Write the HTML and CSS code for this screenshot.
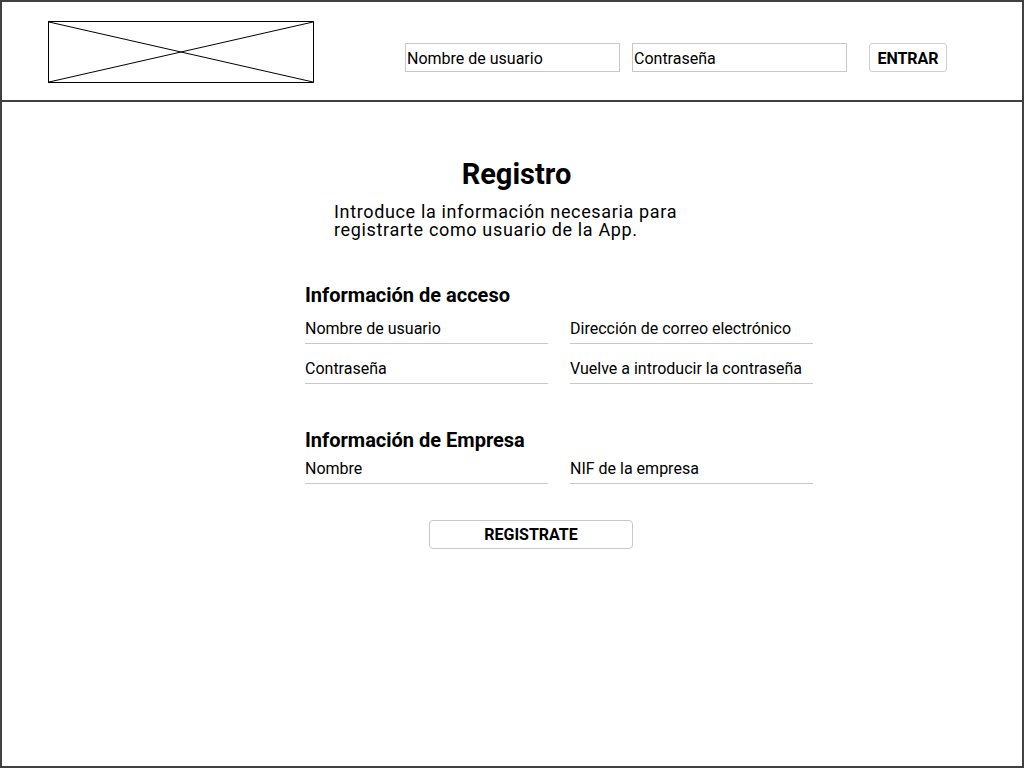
FILE: index.html
```html
<!DOCTYPE html>
<html lang="es">
<head>
<meta charset="utf-8">
<title>Registro</title>
<link rel="stylesheet" href="styles.css">
</head>
<body>
<div class="frame">
  <header class="topbar">
    <div class="logo">
      <svg class="logo-x" viewBox="0 0 100 100" preserveAspectRatio="none">
        <line x1="0" y1="0" x2="100" y2="100" vector-effect="non-scaling-stroke"/>
        <line x1="0" y1="100" x2="100" y2="0" vector-effect="non-scaling-stroke"/>
      </svg>
    </div>
    <div class="login">
      <div class="login-field">Nombre de usuario</div>
      <div class="login-field">Contraseña</div>
      <div class="btn-enter">ENTRAR</div>
    </div>
  </header>
  <main class="content">
    <div class="intro">
      <h1 class="title">Registro</h1>
      <p class="lead">Introduce la información necesaria para<br>registrarte como usuario de la App.</p>
    </div>
    <div class="form">
      <h2 class="section-title">Información de acceso</h2>
      <div class="fields">
        <div class="field">Nombre de usuario</div>
        <div class="field">Dirección de correo electrónico</div>
        <div class="field">Contraseña</div>
        <div class="field">Vuelve a introducir la contraseña</div>
      </div>
      <h2 class="section-title section-title--company">Información de Empresa</h2>
      <div class="fields">
        <div class="field">Nombre</div>
        <div class="field">NIF de la empresa</div>
      </div>
      <div class="btn-register">REGISTRATE</div>
    </div>
  </main>
</div>
</body>
</html>
```
FILE: styles.css
```css
* { box-sizing: border-box; }

body {
  margin: 0;
  background: #fff;
  color: #000;
  font-family: Roboto, "Liberation Sans", sans-serif;
}

.frame {
  width: 1024px;
  height: 768px;
  border: 2px solid #404040;
  display: flex;
  flex-direction: column;
}

.topbar {
  height: 100px;
  flex: none;
  border-bottom: 2px solid #404040;
  display: flex;
  align-items: flex-start;
  padding: 19px 0 0 46px;
}

.logo {
  width: 266px;
  height: 62px;
  border: 1px solid #000;
}

.logo-x {
  display: block;
  width: 100%;
  height: 100%;
}

.logo-x line {
  stroke: #000;
  stroke-width: 1;
}

.login {
  display: flex;
  gap: 12px;
  margin: 22px 0 0 91px;
}

.login-field {
  width: 215px;
  height: 29px;
  border: 1px solid #c8c8c8;
  padding: 1px 1px 0;
  font-size: 16px;
  line-height: 27px;
}

.btn-enter {
  margin-left: 10px;
  width: 78px;
  height: 29px;
  border: 1px solid #cfcfcf;
  border-radius: 3px;
  padding-top: 2px;
  font-size: 16px;
  font-weight: 700;
  line-height: 25px;
  text-align: center;
}

.content {
  padding-top: 55px;
}

.intro {
  margin-left: 332px;
  width: 365px;
}

.title {
  margin: 0;
  font-size: 29px;
  line-height: 34px;
  font-weight: 700;
  text-align: center;
}

.lead {
  margin: 12px 0 0;
  font-size: 18px;
  line-height: 18px;
  letter-spacing: 0.65px;
}

.form {
  margin: 46px 0 0 303px;
  width: 508px;
}

.section-title {
  margin: 0 0 6px;
  font-size: 20px;
  line-height: 20px;
  font-weight: 700;
}

.section-title--company {
  margin: 46px 0 1px;
}

.fields {
  display: grid;
  grid-template-columns: 243px 243px;
  column-gap: 22px;
  row-gap: 7px;
}

.field {
  padding: 8px 0 4px;
  border-bottom: 1px solid #c8c8c8;
  font-size: 16px;
  line-height: 20px;
}

.btn-register {
  margin: 36px 0 0 124px;
  width: 204px;
  height: 29px;
  border: 1px solid #c8c8c8;
  border-radius: 4px;
  padding-top: 1px;
  font-size: 16px;
  font-weight: 700;
  line-height: 26px;
  text-align: center;
}
```
